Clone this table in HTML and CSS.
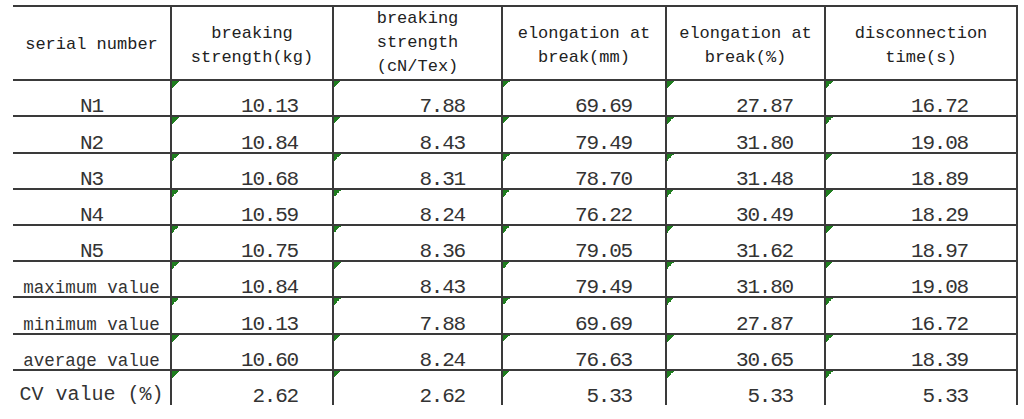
FILE: index.html
```html
<!DOCTYPE html>
<html lang="en">
<head>
    <meta charset="UTF-8">
    <meta name="viewport" content="width=device-width, initial-scale=1.0">
    <title>Breaking test results</title>
    <link rel="stylesheet" href="styles.css">
</head>
<body>

    <div class="sheet">
        <table class="results">
            <colgroup>
                <col class="w1">
                <col class="w2">
                <col class="w3">
                <col class="w4">
                <col class="w5">
                <col class="w6">
            </colgroup>
            <thead>
                <tr>
                    <th class="h-single">serial number</th>
                    <th>breaking<br>strength(kg)</th>
                    <th class="h-triple">breaking<br>strength<br>(cN/Tex)</th>
                    <th>elongation at<br>break(mm)</th>
                    <th>elongation at<br>break(%)</th>
                    <th>disconnection<br>time(s)</th>
                </tr>
            </thead>
            <tbody>
                <tr>
                    <td class="name">N1</td>
                    <td>10.13</td><td>7.88</td><td>69.69</td><td>27.87</td><td>16.72</td>
                </tr>
                <tr class="tall">
                    <td class="name">N2</td>
                    <td>10.84</td><td>8.43</td><td>79.49</td><td>31.80</td><td>19.08</td>
                </tr>
                <tr>
                    <td class="name">N3</td>
                    <td>10.68</td><td>8.31</td><td>78.70</td><td>31.48</td><td>18.89</td>
                </tr>
                <tr>
                    <td class="name">N4</td>
                    <td>10.59</td><td>8.24</td><td>76.22</td><td>30.49</td><td>18.29</td>
                </tr>
                <tr>
                    <td class="name">N5</td>
                    <td>10.75</td><td>8.36</td><td>79.05</td><td>31.62</td><td>18.97</td>
                </tr>
                <tr>
                    <td class="name small">maximum value</td>
                    <td>10.84</td><td>8.43</td><td>79.49</td><td>31.80</td><td>19.08</td>
                </tr>
                <tr class="tall">
                    <td class="name small">minimum value</td>
                    <td>10.13</td><td>7.88</td><td>69.69</td><td>27.87</td><td>16.72</td>
                </tr>
                <tr>
                    <td class="name small">average value</td>
                    <td>10.60</td><td>8.24</td><td>76.63</td><td>30.65</td><td>18.39</td>
                </tr>
                <tr class="last">
                    <td class="name cv">CV value (%)</td>
                    <td>2.62</td><td>2.62</td><td>5.33</td><td>5.33</td><td>5.33</td>
                </tr>
            </tbody>
        </table>
    </div>

</body>
</html>
```

FILE: styles.css
```css
/* feuille de calcul : tableau des essais de rupture */
body {
    margin: 0;
    background: #fff;
    font-family: "Liberation Mono", "Noto Sans CJK SC", monospace;
    color: #2b2b2b;
}

.sheet {
    padding: 5px 0 0 13px;
}

.results {
    table-layout: fixed;
    border-collapse: separate;
    border-spacing: 0;
    width: 1005px;
    border-top: 2px solid #3a3a3a;
}

.w1 { width: 159px; }
.w2 { width: 162px; }
.w3 { width: 169px; }
.w4 { width: 164px; }
.w5 { width: 159px; }
.w6 { width: 192px; }

.results th,
.results td {
    box-sizing: border-box;
    padding: 0;
    border-right: 2px solid #3a3a3a;
    border-bottom: 2px solid #3a3a3a;
}

/* en-tête */
.results th {
    height: 72px;
    font-size: 17px;
    font-weight: normal;
    line-height: 24px;
    color: #222;
    text-align: center;
    vertical-align: middle;
    padding-top: 5px;
}

.results th.h-single {
    padding-top: 4px;
}

.results th.h-triple {
    padding-top: 0;
}

/* cellules de données */
.results td {
    height: 36px;
    font-size: 21px;
    letter-spacing: -1.2px;
    line-height: 16px;
    text-align: right;
    vertical-align: bottom;
    color: #333;
    background: linear-gradient(135deg, #1f7d1f 50%, transparent 50%) no-repeat 0 0 / 7px 7px;
}

.results tr.tall td {
    height: 37px;
}

.results tr.last td {
    height: 34px;
    border-bottom: none;
}

.results td:nth-child(2) { padding-right: 34px; }
.results td:nth-child(3) { padding-right: 36px; }
.results td:nth-child(4) { padding-right: 33px; }
.results td:nth-child(5) { padding-right: 31px; }
.results td:nth-child(6) { padding-right: 48px; }

/* première colonne */
.results td.name {
    text-align: center;
    background: none;
    padding-right: 0;
    padding-bottom: 0;
}

.results td.name.small {
    font-size: 17.5px;
    letter-spacing: 0;
}

.results td.name.cv {
    font-size: 20px;
    letter-spacing: 0;
    padding-bottom: 2px;
}
```
